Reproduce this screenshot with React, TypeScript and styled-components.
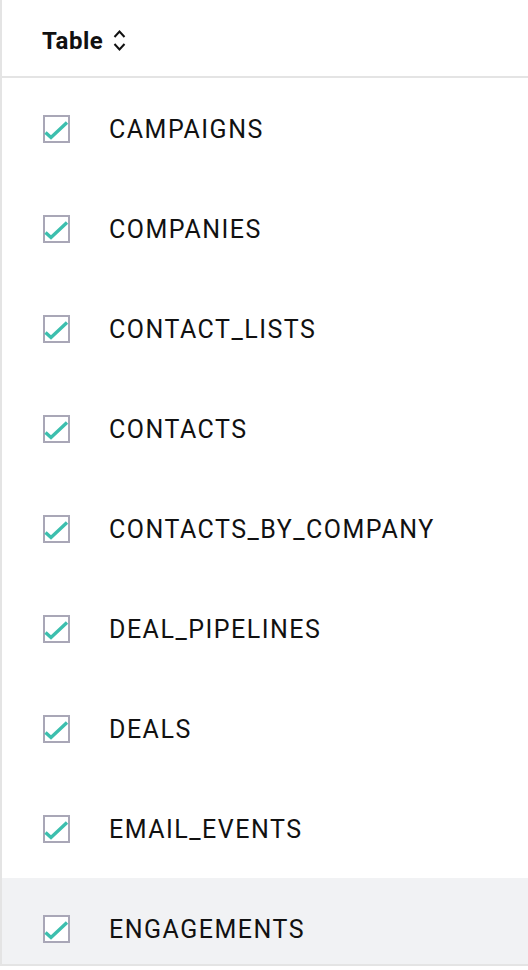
import styled, { createGlobalStyle } from 'styled-components';

const tables = [
  'CAMPAIGNS',
  'COMPANIES',
  'CONTACT_LISTS',
  'CONTACTS',
  'CONTACTS_BY_COMPANY',
  'DEAL_PIPELINES',
  'DEALS',
  'EMAIL_EVENTS',
  'ENGAGEMENTS',
];

const GlobalStyle = createGlobalStyle`
  body {
    margin: 0;
    background: #ffffff;
    font-family: Roboto, "Liberation Sans", sans-serif;
    color: #111111;
  }
`;

const SortIcon = () => (
  <svg width="13" height="23" viewBox="0 0 13 23" fill="none">
    <path d="M1.5 8 L6.5 2.5 L11.5 8" stroke="#111" strokeWidth="2" />
    <path d="M1.5 15 L6.5 20.5 L11.5 15" stroke="#111" strokeWidth="2" />
  </svg>
);

const CheckIcon = () => (
  <svg width="27" height="28" viewBox="0 0 27 28" fill="none">
    <path
      d="M2.5 17.5 L8 22.5 L24 7.5"
      stroke="#3cbfae"
      strokeWidth="3.4"
      strokeLinejoin="miter"
    />
  </svg>
);

const App = () => {
  return (
    <>
      <GlobalStyle />
      <TableWrap>
        <Header>
          <HeaderLabel>Table</HeaderLabel>
          <SortIcon />
        </Header>
        {tables.map((name, i) => (
          <Row key={name} $active={i === tables.length - 1}>
            <Checkbox>
              <CheckIcon />
            </Checkbox>
            <RowLabel>{name}</RowLabel>
          </Row>
        ))}
      </TableWrap>
    </>
  );
};
export default App;

const TableWrap = styled.div`
  height: 964px;
  overflow: hidden;
  border-left: 2px solid #e4e4e4;
  border-bottom: 2px solid #e4e4e4;
`;

const Header = styled.div`
  height: 78px;
  box-sizing: border-box;
  padding: 5px 0 0 40px;
  display: flex;
  align-items: center;
  gap: 10px;
  border-bottom: 2px solid #e4e4e4;
`;

const HeaderLabel = styled.span`
  font-size: 24px;
  font-weight: 700;
  letter-spacing: 0.5px;
`;

const Row = styled.div<{ $active: boolean }>`
  height: 100px;
  display: flex;
  align-items: center;
  padding-left: 41px;
  background: ${(props) => (props.$active ? '#f1f2f4' : '#ffffff')};
`;

const Checkbox = styled.span`
  width: 27px;
  height: 28px;
  box-sizing: border-box;
  border: 2px solid #a9a7b7;
  background: #ffffff;
  display: flex;
  align-items: center;
  justify-content: center;
  margin: 2px 39px 0 0;

  svg {
    flex-shrink: 0;
  }
`;

const RowLabel = styled.span`
  font-size: 25px;
  letter-spacing: 1.5px;
  padding-top: 3px;
`;
